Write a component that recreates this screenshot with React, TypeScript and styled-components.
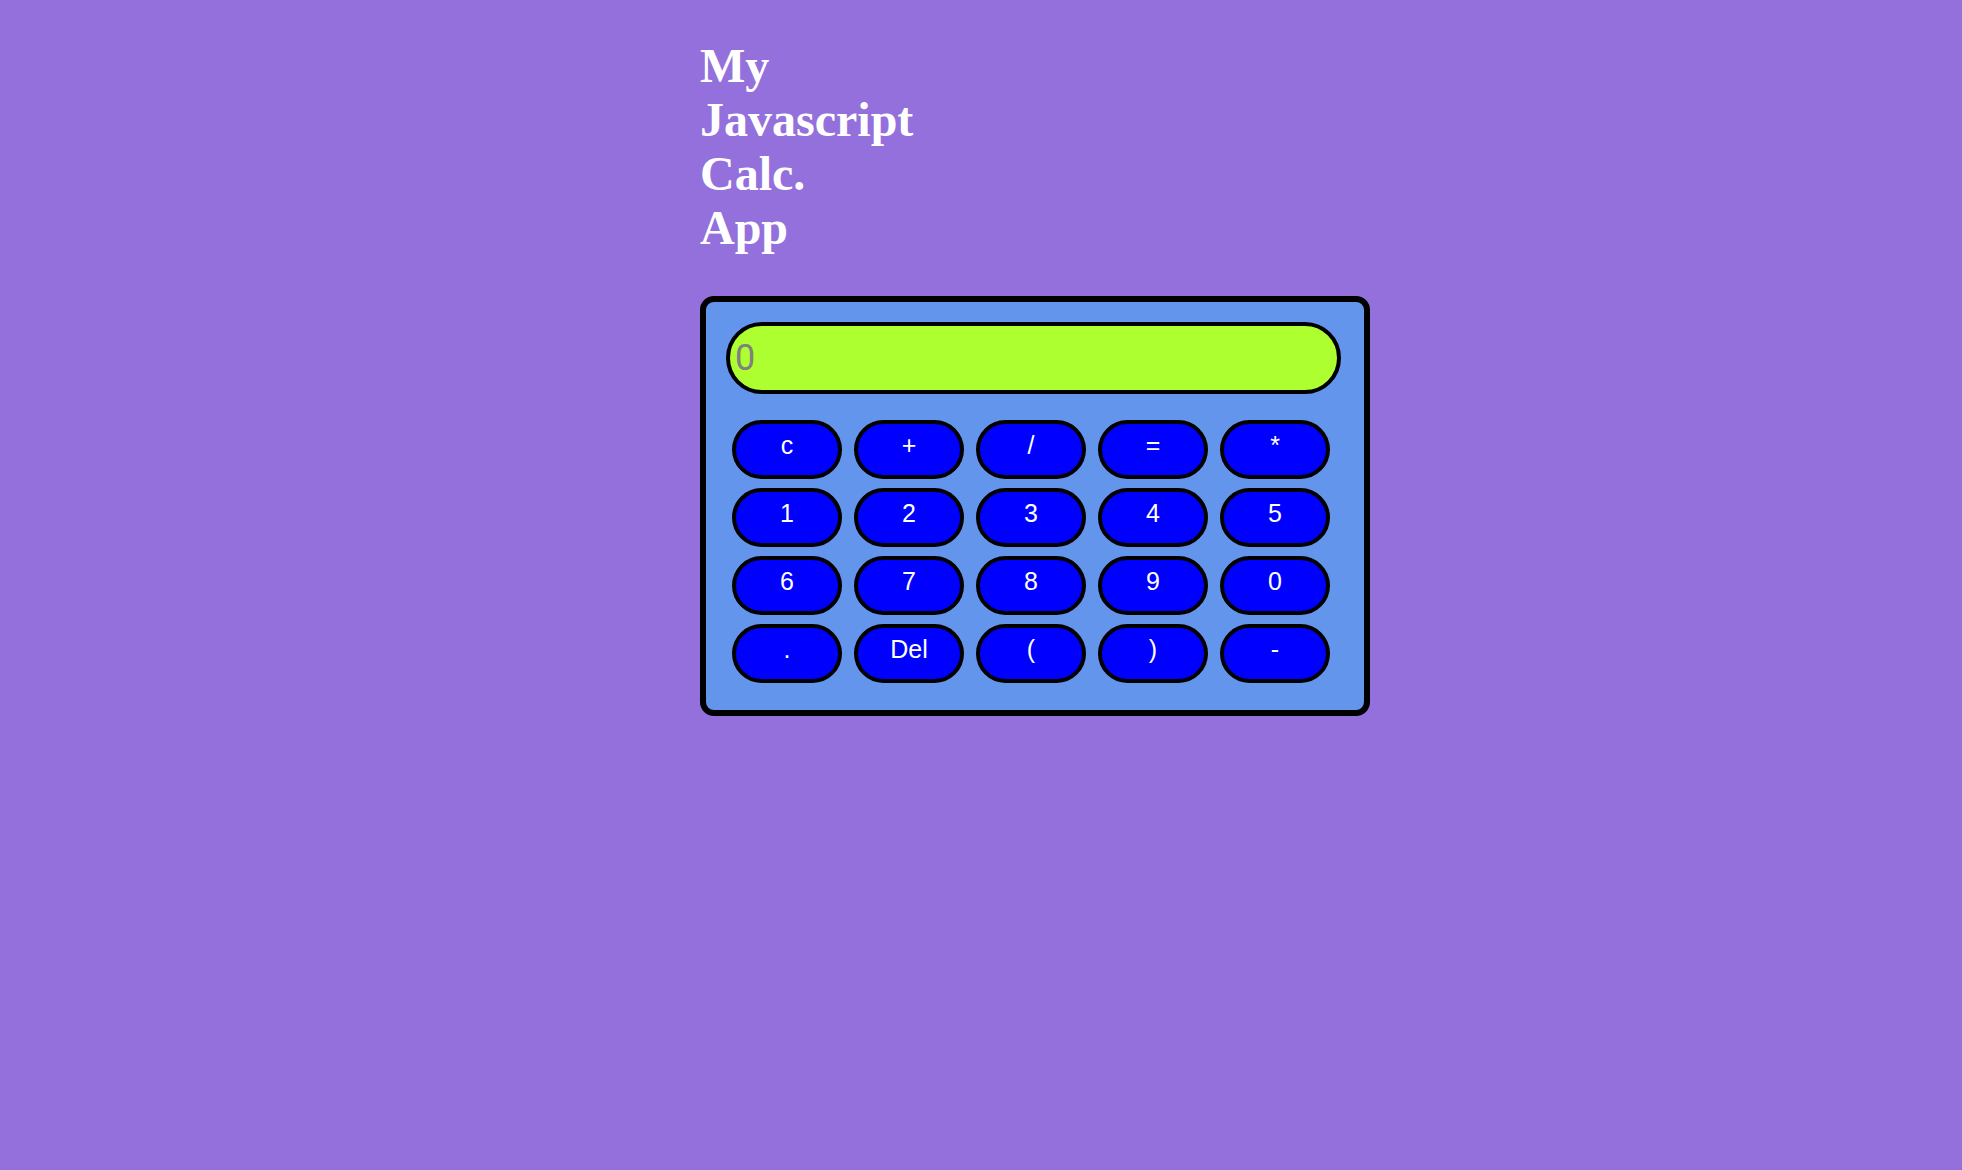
import React from "react";
import styled, { createGlobalStyle } from "styled-components";

const GlobalStyle = createGlobalStyle`
  html, body {
    margin: 0;
    padding: 0;
    background: #9370db;
  }
  body {
    min-height: 1170px;
  }
`;

const Page = styled.main`
  display: flex;
  flex-direction: column;
  align-items: flex-start;
  padding: 39px 0 0 700px;
`;

const Title = styled.h1`
  margin: 0 0 41px;
  width: 180px;
  font-family: "Liberation Serif", "Times New Roman", serif;
  font-weight: 700;
  font-size: 48px;
  line-height: 54px;
  color: #ffffff;
`;

const Calculator = styled.section`
  box-sizing: border-box;
  width: 670px;
  height: 420px;
  padding: 20px 0 0 20px;
  background: #6495ed;
  border: 6px solid #000;
  border-radius: 14px;
  display: flex;
  flex-direction: column;
  align-items: flex-start;
`;

const Display = styled.div`
  box-sizing: border-box;
  width: 615px;
  height: 72px;
  padding-left: 5px;
  background: #adff2f;
  border: 4px solid #000;
  border-radius: 36px;
  display: flex;
  align-items: center;
  font-family: Roboto, "Noto Sans", sans-serif;
  font-size: 36px;
  color: #808080;
`;

const Keypad = styled.div`
  margin: 26px 0 0 6px;
  display: grid;
  grid-template-columns: repeat(5, 110px);
  grid-auto-rows: 59px;
  column-gap: 12px;
  row-gap: 9px;
`;

const Key = styled.button`
  box-sizing: border-box;
  margin: 0;
  padding: 7px 0 0;
  background: #0000ff;
  border: 4px solid #000;
  border-radius: 30px;
  display: flex;
  justify-content: center;
  align-items: flex-start;
  font-family: "Liberation Sans", Arial, sans-serif;
  font-size: 25px;
  line-height: normal;
  color: #ffffff;
  cursor: pointer;
`;

const keys = [
  "c", "+", "/", "=", "*",
  "1", "2", "3", "4", "5",
  "6", "7", "8", "9", "0",
  ".", "Del", "(", ")", "-",
];

export default function App() {
  return (
    <>
      <GlobalStyle />
      <Page>
        <Title>My Javascript Calc. App</Title>
        <Calculator>
          <Display>0</Display>
          <Keypad>
            {keys.map((k) => (
              <Key key={k}>{k}</Key>
            ))}
          </Keypad>
        </Calculator>
      </Page>
    </>
  );
}
